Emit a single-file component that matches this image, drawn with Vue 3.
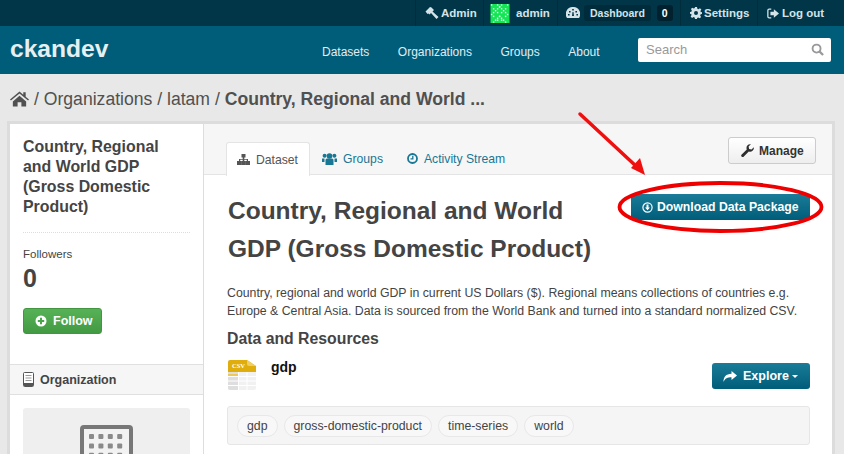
<script setup>
const navLinks = ["Datasets", "Organizations", "Groups", "About"];
const tags = ["gdp", "gross-domestic-product", "time-series", "world"];

// small identicon for the admin avatar, mirrored down the middle
const avatarCells = [];
for (let y = 0; y < 10; y++) {
  for (let x = 0; x < 5; x++) {
    if ((x * 3 + y * 2 + x * y) % 4 === 1 || (x + y) % 5 === 0) {
      avatarCells.push({ x: x * 2 + 0.4, y: y * 1.9 + 0.3 });
      avatarCells.push({ x: 16.4 - x * 2, y: y * 1.9 + 0.3 });
    }
  }
}

const gridDots = [];
for (let r = 0; r < 4; r++) {
  for (let c = 0; c < 4; c++) {
    gridDots.push({ x: 9 + c * 9.4, y: 9 + r * 9.4 });
  }
}
</script>

<template>
  <div class="page">
    <!-- account bar -->
    <div class="account">
      <div class="account-item admin">
        <svg class="ic" width="14" height="14" viewBox="0 0 14 14"><path fill="#d5e3e8" d="M0.500 5.500 5 1l1.500.5L9 4 7.500 5.500 13.500 11l-2 2L6 7 4.500 8.500 3.500 7.500 2.500 8z" /></svg>
        <span>Admin</span>
      </div>
      <div class="account-item user">
        <svg class="avatar" width="20" height="19" viewBox="0 0 19 19">
          <rect width="19" height="19" fill="#12e655" />
          <rect v-for="(c, i) in avatarCells" :key="i" :x="c.x" :y="c.y" width="1.400" height="1.400" fill="#e8fbee" />
        </svg>
        <span>admin</span>
      </div>
      <div class="account-item dash">
        <svg class="ic" width="14" height="12" viewBox="0 0 14 12"><path fill="#d5e3e8" d="M7 0a7 7 0 0 0-6 11h12A7 7 0 0 0 7 0zM6.200 2h1.600v1.600H6.200zM3 4h1.600v1.600H3zm6.400 0H11v1.600H9.400zM2 7h1.600v1.600H2zm8.400 0H12v1.600h-1.600zM6 9l.5-4h1L8 9z" /></svg>
        <span class="dash-label">Dashboard</span>
        <span class="dash-count">0</span>
      </div>
      <div class="account-item settings">
        <svg class="ic" width="12" height="12" viewBox="0 0 24 24"><path fill="#d5e3e8" fill-rule="evenodd" d="M10 0h4l.7 3.300 2.300 1 2.900-1.900 2.800 2.800L20.800 8l1 2.300L24 10v4l-2.700.7-1 2.300 1.900 2.900-2.800 2.800-2.900-1.900-2.300 1L14 24h-4l-.7-3.100-2.300-1-2.900 1.900-2.800-2.800L3.200 16l-1-2.300L0 14v-4l2.700-.7 1-2.300-1.900-2.900 2.800-2.800L7.500 3.200l2-1zM12 8a4 4 0 1 0 0 8 4 4 0 0 0 0-8z" /></svg>
        <span>Settings</span>
      </div>
      <div class="account-item logout">
        <svg class="ic" width="12" height="11" viewBox="0 0 14 12"><path fill="none" stroke="#d5e3e8" stroke-width="1.500" d="M5 1H2.500A1.500 1.500 0 0 0 1 2.500v7A1.500 1.500 0 0 0 2.500 11H5" /><path fill="#d5e3e8" d="M4 4h4V1l6 5-6 5V8H4z" /></svg>
        <span>Log out</span>
      </div>
    </div>

    <!-- masthead -->
    <header class="masthead">
      <div class="logo">ckandev</div>
      <nav class="nav">
        <a v-for="link in navLinks" :key="link">{{ link }}</a>
      </nav>
      <div class="search">
        <span>Search</span>
        <svg width="13" height="13" viewBox="0 0 14 14"><circle cx="6" cy="6" r="4.300" fill="none" stroke="#999" stroke-width="2" /><path stroke="#999" stroke-width="2.400" d="m9 9 4 4" /></svg>
      </div>
    </header>

    <!-- breadcrumb -->
    <div class="toolbar">
      <svg width="19" height="16" viewBox="0 0 20 16"><path fill="#505050" d="M10 0 0 8.500l1 1.200L10 2.200l9 7.500 1-1.200-3.500-3V1h-2.500v2.500zM3 10.500V16h5v-4.500h4V16h5v-5.500l-7-5.800z" /></svg>
      <span class="crumb">/ Organizations / latam / <b>Country, Regional and World ...</b></span>
    </div>

    <!-- main wrapper -->
    <div class="wrapper">
      <aside class="side">
        <div class="side-body">
          <h1 class="side-title">Country, Regional and World GDP (Gross Domestic Product)</h1>
          <div class="side-rule"></div>
          <div class="side-label">Followers</div>
          <div class="side-count">0</div>
          <button class="btn-follow">
            <svg width="12" height="12" viewBox="0 0 12 12"><circle cx="6" cy="6" r="5.500" fill="#fff" /><path stroke="#4aa64a" stroke-width="2" d="M6 2.800v6.400M2.800 6h6.400" /></svg>
            Follow
          </button>
        </div>
        <div class="side-head">
          <svg width="11" height="15" viewBox="0 0 11 15"><rect x=".5" y=".5" width="10" height="14" rx="1" fill="#fff" stroke="#555" /><path stroke="#999" d="M2.500 3.500h6M2.500 6h6M2.500 8.500h6" /><rect x="1" y="11" width="9" height="3" fill="#555" /></svg>
          Organization
        </div>
        <div class="org-card">
          <svg width="53" height="60" viewBox="0 0 53 60">
            <rect x="2" y="2" width="49" height="70" rx="2" fill="#f2f2f2" stroke="#777" stroke-width="4" />
            <rect v-for="(d, i) in gridDots" :key="i" :x="d.x" :y="d.y" width="5" height="5" rx="1" fill="#8a8a8a" />
          </svg>
        </div>
      </aside>

      <main class="primary">
        <div class="tabs">
          <div class="tab active">
            <svg width="13" height="11" viewBox="0 0 13 11"><path fill="#555" d="M4.500 0h4v3.500h-4zM5.700 3.500h1.600V5H11v2h-1.200V5.800H7.300V7H5.700V5.800H3.200V7H2V5h3.700zM0 7h4.300v4H0zm4.400 0h4.200v4H4.400zm4.300 0H13v4H8.700z" /></svg>
            Dataset
          </div>
          <div class="tab">
            <svg width="15" height="12" viewBox="0 0 15 12"><circle cx="7.500" cy="3" r="2.800" fill="#187794" /><circle cx="2.600" cy="2.800" r="2" fill="#187794" /><circle cx="12.400" cy="2.800" r="2" fill="#187794" /><path fill="#187794" d="M3.500 7c0-1 1-1.500 2-1.500h4c1 0 2 .5 2 1.500v5h-8zM0 5.500h2.500V9H0zm12.500 0H15V9h-2.500z" /></svg>
            Groups
          </div>
          <div class="tab">
            <svg width="11" height="11" viewBox="0 0 11 11"><circle cx="5.500" cy="5.500" r="4.500" fill="none" stroke="#187794" stroke-width="1.800" /><path fill="none" stroke="#187794" stroke-width="1.300" d="M5.800 2.800v3H3.500" /></svg>
            Activity Stream
          </div>
          <button class="btn-manage">
            <svg width="13" height="13" viewBox="0 0 13 13"><path fill="#2e2e2e" d="M12.800 3.200a3.800 3.800 0 0 1-5 4.300L2.600 12.700a1.200 1.200 0 0 1-2-.3 1.200 1.200 0 0 1 .1-1.800l5.100-5.200A3.800 3.800 0 0 1 9.900.2L7.600 2.400l.5 2.500 2.400.6z" /></svg>
            Manage
          </button>
        </div>

        <div class="content">
          <div class="title-row">
            <h1 class="title">Country, Regional and World GDP (Gross Domestic Product)</h1>
            <button class="btn-primary">
              <svg width="11" height="11" viewBox="0 0 11 11"><circle cx="5.500" cy="5.500" r="4.600" fill="none" stroke="#fff" stroke-width="1.200" /><path fill="#fff" d="M4.500 2.500h2v3H8L5.500 8.300 3 5.500h1.500z" /></svg>
              Download Data Package
            </button>
          </div>
          <p class="notes">Country, regional and world GDP in current US Dollars ($). Regional means collections of countries e.g. Europe &amp; Central Asia. Data is sourced from the World Bank and turned into a standard normalized CSV.</p>
          <h2 class="res-heading">Data and Resources</h2>
          <div class="resource">
            <svg width="29" height="30" viewBox="0 0 29 30">
              <path fill="#f1f1f1" d="M0 10h28v18a2 2 0 0 1-2 2H2a2 2 0 0 1-2-2z" />
              <path fill="#dedede" d="M0 12h10v18H2a2 2 0 0 1-2-2z" />
              <path stroke="#fff" d="M0 16.500h28M0 21h28M0 25.500h28M10.500 12v18M19 12v18" />
              <path fill="#dfae0c" d="M2 0h17l9 6v6H0V2a2 2 0 0 1 2-2z" />
              <path fill="#efcf63" d="M19 0l9 6h-7a2 2 0 0 1-2-2z" />
              <rect y="14" width="10" height="2" fill="#eec95a" />
              <text x="4" y="8" class="csv">CSV</text>
            </svg>
            <span class="res-name">gdp</span>
            <button class="btn-explore">
              <svg width="14" height="11" viewBox="0 0 14 11"><path fill="#fff" d="M8.500 0 14 4.500 8.500 9V6.300C4.500 6.300 2 7.300 0.500 11 .3 6 3 2.800 8.500 2.700z" /></svg>
              Explore
              <span class="caret"></span>
            </button>
          </div>
          <div class="tag-well">
            <span v-for="tag in tags" :key="tag" class="tag">{{ tag }}</span>
          </div>
        </div>
      </main>
    </div>

    <!-- hand drawn annotation on top of the screenshot -->
    <svg class="annotation" width="844" height="454" viewBox="0 0 844 454">
      <path fill="none" stroke="#f00f0f" stroke-width="3.500" stroke-linecap="round" d="M580 114 637 167" />
      <path fill="#f00f0f" d="M645 175 631 168 640 158z" />
      <ellipse cx="720.500" cy="207" rx="101" ry="24" fill="none" stroke="#ee0000" stroke-width="3.800" />
    </svg>
  </div>
</template>

<style scoped>
.page {
  position: relative;
  width: 844px;
  height: 454px;
  overflow: hidden;
  background: #e8e8e8;
  font-family: "Liberation Sans", Arial, sans-serif;
  color: #444;
}

.account {
  display: flex;
  justify-content: flex-end;
  height: 26px;
  background: #003648;
  color: #d5e3e8;
  font-size: 11.500px;
  font-weight: bold;
}

.account-item {
  display: flex;
  align-items: center;
  box-sizing: border-box;
  border-left: 1px solid #002c3b;
}

.admin {
  width: 68px;
  gap: 2px;
  padding-left: 9px;
}

.user {
  width: 74px;
  gap: 6px;
  padding-left: 6px;
}

.dash {
  width: 123px;
  padding-left: 8px;
  font-size: 10.500px;
}

.settings {
  width: 77px;
  gap: 2px;
  padding-left: 9px;
}

.logout {
  width: 87px;
  gap: 3px;
  padding-left: 9px;
}

.dash-label {
  margin-left: 4px;
  padding: 2px 6px;
  border-radius: 3px;
  background: #002b3a;
}

.dash-count {
  margin-left: 6px;
  padding: 2px 5px;
  border-radius: 3px;
  background: #00212d;
  color: #fff;
}

.masthead {
  display: flex;
  align-items: center;
  height: 48px;
  padding: 0 13px 0 10px;
  background: #005d7a;
  color: #e0ecf0;
}

.logo {
  width: 312px;
  margin-top: -3px;
  color: #e6f0f3;
  font-size: 24.600px;
  font-weight: bold;
  line-height: 30px;
}

.nav {
  display: flex;
  gap: 28.500px;
  margin-top: 3px;
  font-size: 12px;
}

.search {
  display: flex;
  align-items: center;
  justify-content: space-between;
  box-sizing: border-box;
  width: 193px;
  height: 24px;
  margin-left: auto;
  margin-top: -1px;
  padding: 0 7px 0 8px;
  border-radius: 2px;
  background: #fff;
  color: #999;
  font-size: 13px;
}

.toolbar {
  display: flex;
  align-items: center;
  gap: 5px;
  height: 50px;
  padding-left: 10px;
  font-size: 17.600px;
  color: #505050;
}

.crumb {
  white-space: nowrap;
}

.crumb b {
  color: #505050;
}

.wrapper {
  display: flex;
  width: 822px;
  height: 400px;
  margin-left: 10px;
  background: #fff;
  box-shadow: 0 0 0 3px #dcdcdc;
}

.side {
  flex: none;
  box-sizing: border-box;
  width: 194px;
  border-right: 1px solid #ddd;
}

.side-body {
  height: 240px;
  box-sizing: border-box;
  padding: 13px 13px 0;
}

.side-title {
  margin: 0;
  color: #444;
  font-size: 15.900px;
  line-height: 20px;
}

.side-rule {
  margin-top: 15px;
  border-top: 1px dotted #ddd;
}

.side-label {
  margin-top: 15px;
  font-size: 11.500px;
}

.side-count {
  margin-top: 3px;
  color: #444;
  font-size: 25px;
  font-weight: bold;
  line-height: 30px;
}

.btn-follow {
  display: flex;
  align-items: center;
  gap: 6px;
  width: 79px;
  height: 26px;
  margin-top: 15px;
  padding: 0 0 0 11px;
  border: 1px solid #42963f;
  border-radius: 3px;
  background: linear-gradient(#57b257, #429a42);
  color: #fff;
  font-family: inherit;
  font-size: 12.500px;
  font-weight: bold;
}

.side-head {
  display: flex;
  align-items: center;
  gap: 6px;
  height: 29px;
  padding-left: 13px;
  border-top: 1px solid #e0e0e0;
  border-bottom: 1px solid #e0e0e0;
  background: #f6f6f6;
  color: #444;
  font-size: 12.500px;
  font-weight: bold;
}

.org-card {
  display: flex;
  justify-content: center;
  height: 120px;
  margin: 13px 13px 0;
  padding-top: 17px;
  box-sizing: border-box;
  border-radius: 3px;
  background: #efefef;
}

.primary {
  flex: 1;
  min-width: 0;
}

.tabs {
  display: flex;
  position: relative;
  height: 51px;
  box-sizing: border-box;
  padding: 18px 0 0 22px;
  border-bottom: 1px solid #e4e4e4;
  background: #f6f6f6;
}

.tab {
  display: flex;
  align-items: center;
  gap: 6px;
  height: 33px;
  box-sizing: border-box;
  padding: 0 12px;
  color: #187794;
  font-size: 12.200px;
}

.tab.active {
  height: 34px;
  padding: 0 11px 0 10px;
  border: 1px solid #e4e4e4;
  border-bottom: 0;
  border-radius: 3px 3px 0 0;
  background: #fff;
  color: #555;
}

.btn-manage {
  display: flex;
  align-items: center;
  gap: 5px;
  position: absolute;
  top: 13px;
  right: 16px;
  box-sizing: border-box;
  width: 88px;
  height: 27px;
  padding: 0 0 0 12px;
  border: 1px solid #ccc;
  border-radius: 3px;
  background: linear-gradient(#fff, #eee);
  color: #333;
  font-family: inherit;
  font-size: 12px;
  font-weight: bold;
}

.content {
  padding: 17px 22px 0 24px;
}

.title-row {
  display: flex;
  justify-content: space-between;
  align-items: flex-start;
}

.title {
  width: 385px;
  margin: 0;
  color: #444;
  font-size: 24.500px;
  line-height: 37.500px;
}

.btn-primary {
  flex: none;
  display: flex;
  align-items: center;
  gap: 4px;
  box-sizing: border-box;
  width: 179px;
  height: 26px;
  margin-top: 2px;
  padding: 0 0 0 11px;
  border: 0;
  border-radius: 2px;
  background: linear-gradient(#1a7c98, #005d7a);
  color: #fff;
  font-family: inherit;
  font-size: 12.250px;
  font-weight: bold;
}

.notes {
  width: 600px;
  margin: 17px 0 0 -1px;
  font-size: 12.300px;
  line-height: 18px;
}

.res-heading {
  margin: 9px 0 0 -1px;
  color: #444;
  font-size: 15.800px;
  line-height: 20px;
}

.resource {
  display: flex;
  align-items: flex-start;
  position: relative;
  height: 46px;
  margin-top: 11px;
}

.csv {
  fill: #fff;
  font-size: 6.500px;
  font-weight: bold;
  font-family: "Liberation Serif", serif;
}

.res-name {
  margin: -2px 0 0 14px;
  color: #111;
  font-size: 14px;
  font-weight: bold;
  line-height: 18px;
}

.btn-explore {
  display: flex;
  align-items: center;
  gap: 6px;
  position: absolute;
  top: 3px;
  right: 0;
  box-sizing: border-box;
  width: 98px;
  height: 26px;
  padding: 0 0 0 11px;
  border: 0;
  border-radius: 3px;
  background: linear-gradient(#1a7c98, #005d7a);
  color: #fff;
  font-family: inherit;
  font-size: 12.500px;
  font-weight: bold;
}

.caret {
  margin-left: -3px;
  border: 3.500px solid transparent;
  border-top-color: #fff;
  border-bottom: 0;
}

.tag-well {
  display: flex;
  align-items: center;
  gap: 6px;
  height: 39px;
  box-sizing: border-box;
  margin-left: -1px;
  padding-left: 9px;
  border: 1px solid #e6e6e6;
  border-radius: 3px;
  background: #f5f5f5;
}

.tag {
  padding: 3px 9px;
  border: 1px solid #e8e8e8;
  border-radius: 11px;
  background: #f8f8f8;
  color: #444;
  font-size: 12.300px;
  line-height: 14px;
}

.annotation {
  position: absolute;
  top: 0;
  left: 0;
  pointer-events: none;
}
</style>
